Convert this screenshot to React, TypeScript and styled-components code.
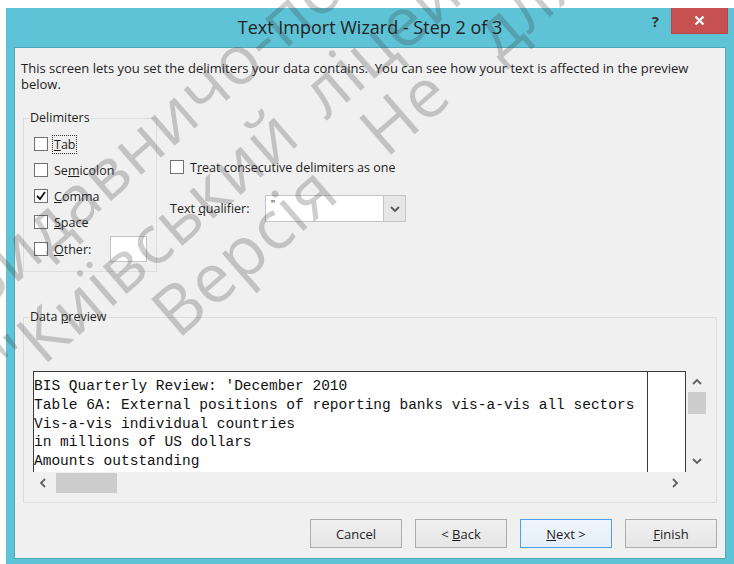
import React from 'react';
import styled, { createGlobalStyle, css } from 'styled-components';

const GlobalStyle = createGlobalStyle`
  html, body {
    margin: 0;
    padding: 0;
    background: #ffffff;
  }
  body {
    font-family: "Open Sans", "Noto Sans", sans-serif;
    color: #1e1e1e;
  }
`;

const UI_FONT = `"Open Sans", "Noto Sans", sans-serif`;

const Page = styled.div`
  position: relative;
  width: 734px;
  height: 564px;
  overflow: hidden;
`;

const Frame = styled.div`
  width: 728px;
  height: 556px;
  margin: 8px 0 0 6px;
  background: #5ec3d6;
  display: flex;
  flex-direction: column;
`;

const TitleBar = styled.div`
  height: 39px;
  display: grid;
  grid-template-columns: 1fr auto 1fr;
  align-items: start;
`;

const Title = styled.div`
  grid-column: 2;
  margin-top: 7px;
  font: 400 18px ${UI_FONT};
  color: #222;
  white-space: nowrap;
`;

const TitleControls = styled.div`
  grid-column: 3;
  justify-self: end;
  display: flex;
  align-items: flex-start;
  margin-right: 6px;
`;

const HelpGlyph = styled.span`
  font: 700 15px ${UI_FONT};
  color: #333;
  margin: 3px 12px 0 0;
`;

const CloseButton = styled.div`
  width: 57px;
  height: 26px;
  background: #c75050;
  border: 1px solid #b44848;
  border-top: none;
  box-sizing: border-box;
  display: flex;
  align-items: center;
  justify-content: center;
`;

const Client = styled.div`
  flex: 1;
  margin: 0 8px 5px 8px;
  background: #f0f0f0;
  border: 1px solid #4ba8b8;
  display: flex;
  flex-direction: column;
`;

const Intro = styled.p`
  margin: 12px 6px 0 6px;
  font: 400 13px/16px ${UI_FONT};
  color: #1e1e1e;
`;

const OptionsRow = styled.div`
  display: flex;
  gap: 13px;
  margin: 18px 0 0 8px;
`;

const Group = styled.fieldset<{ $width: number }>`
  width: ${p => p.$width}px;
  box-sizing: border-box;
  margin: 0;
  padding: 0;
  border: 1px solid #dcdcdc;
  min-inline-size: 0;
`;

const GroupLabel = styled.legend`
  margin-left: 5px;
  padding: 0 1px;
  font: 400 12.5px/16px ${UI_FONT};
  color: #1e1e1e;
`;

const DelimiterList = styled.div`
  display: flex;
  flex-direction: column;
  padding: 5px 0 8px 10px;
`;

const CheckRow = styled.label<{ $tall?: boolean }>`
  height: ${p => (p.$tall ? 28 : 26)}px;
  display: flex;
  align-items: center;
  gap: 4px;
  font: 400 12.5px ${UI_FONT};
  color: #1e1e1e;
`;

const Box = styled.span`
  width: 14px;
  height: 14px;
  box-sizing: border-box;
  border: 1px solid #707070;
  background: #fff;
  display: flex;
  align-items: center;
  justify-content: center;
  flex: none;
`;

const CheckText = styled.span<{ $focused?: boolean }>`
  padding: 0 1px;
  border: 1px dotted transparent;
  ${p =>
    p.$focused &&
    css`
      border-color: #333;
    `}
`;

const OtherInput = styled.span`
  width: 37px;
  height: 26px;
  box-sizing: border-box;
  margin-left: 13px;
  background: #fff;
  border: 1px solid #c4c4c4;
`;

const SideOptions = styled.div`
  display: flex;
  flex-direction: column;
  padding-top: 44px;
  gap: 15px;
`;

const QualifierRow = styled.div`
  display: flex;
  align-items: center;
  font: 400 12.5px ${UI_FONT};
`;

const QualifierLabel = styled.span`
  width: 95px;
  flex: none;
`;

const Select = styled.div`
  width: 141px;
  height: 27px;
  box-sizing: border-box;
  background: #fff;
  border: 1px solid #c4c4c4;
  display: flex;
`;

const SelectValue = styled.span`
  flex: 1;
  padding: 2px 0 0 5px;
  font: 400 11px "Liberation Sans", sans-serif;
  color: #333;
`;

const SelectArrow = styled.span`
  width: 21px;
  background: #e6e6e6;
  border-left: 1px solid #c4c4c4;
  display: flex;
  align-items: center;
  justify-content: center;
`;

const PreviewGroup = styled(Group)`
  margin: 37px 0 0 8px;
`;

const Preview = styled.div`
  display: grid;
  grid-template-columns: 653px 20px;
  grid-template-rows: 101px 21px;
  margin: 46px 0 9px 9px;
`;

const PreviewPane = styled.div`
  display: flex;
  background: #fff;
  border: 1px solid #3a3a3a;
  border-bottom: none;
  overflow: hidden;
`;

const PreviewText = styled.pre`
  width: 613px;
  flex: none;
  margin: 0;
  padding: 5px 0 0 0;
  border-right: 1px solid #3a3a3a;
  font: 400 14.5px/18.75px "Liberation Mono", "Courier New", monospace;
  color: #111;
  overflow: hidden;
`;

const VScroll = styled.div`
  display: flex;
  flex-direction: column;
  align-items: center;
  padding: 6px 0 6px 2px;
`;

const HScroll = styled.div`
  display: flex;
  align-items: center;
  padding: 0 6px 0 5px;
`;

const Thumb = styled.span<{ $w: number; $h: number }>`
  display: block;
  width: ${p => p.$w}px;
  height: ${p => p.$h}px;
  background: #cdcdcd;
  flex: none;
`;

const VThumbSlot = styled.div`
  flex: 1;
  align-self: stretch;
  padding-top: 5px;
`;

const HThumbSlot = styled.div`
  flex: 1;
  padding-left: 8px;
`;

const ButtonBar = styled.div`
  display: flex;
  justify-content: flex-end;
  gap: 13px;
  margin: 16px 8px 0 0;
`;

const Button = styled.button<{ $default?: boolean }>`
  width: 92px;
  height: 29px;
  padding: 0;
  font: 400 13px ${UI_FONT};
  color: #1e1e1e;
  background: linear-gradient(#f0f0f0, #e5e5e5);
  border: 1px solid #acacac;
  ${p =>
    p.$default &&
    css`
      border-color: #4c9fe8;
      background: linear-gradient(#eef5fc, #e6eef8);
    `}
`;

const Watermark = styled.div`
  position: absolute;
  inset: 0;
  pointer-events: none;
`;

const WatermarkLine = styled.span<{ $x: number; $y: number; $spread?: number }>`
  position: absolute;
  left: ${p => p.$x}px;
  top: ${p => p.$y}px;
  transform-origin: 0 60px;
  transform: rotate(-41deg);
  font: 400 68px/68px ${UI_FONT};
  letter-spacing: 1px;
  word-spacing: ${p => p.$spread ?? 0}px;
  color: rgba(60, 60, 60, 0.26);
  white-space: nowrap;
`;

type Dir = 'up' | 'down' | 'left' | 'right';

const CHEVRONS: Record<Dir, string> = {
  up: '1,7 5,3 9,7',
  down: '1,3 5,7 9,3',
  left: '7,1 3,5 7,9',
  right: '3,1 7,5 3,9',
};

const Chevron = ({ dir, color = '#606060' }: { dir: Dir; color?: string }) => (
  <svg width="10" height="10" viewBox="0 0 10 10">
    <polyline points={CHEVRONS[dir]} fill="none" stroke={color} strokeWidth="1.8" />
  </svg>
);

const CheckMark = () => (
  <svg width="10" height="10" viewBox="0 0 10 10">
    <polyline points="1,5 4,8 9,1" fill="none" stroke="#111" strokeWidth="1.8" />
  </svg>
);

const Check = ({ checked, children, focused }: { checked?: boolean; focused?: boolean; children: React.ReactNode }) => (
  <CheckRow>
    <Box>{checked && <CheckMark />}</Box>
    <CheckText $focused={focused}>{children}</CheckText>
  </CheckRow>
);

const PREVIEW_LINES = [
  "BIS Quarterly Review: 'December 2010",
  'Table 6A: External positions of reporting banks vis-a-vis all sectors',
  'Vis-a-vis individual countries',
  'in millions of US dollars',
  'Amounts outstanding',
];

export default function App() {
  return (
    <Page>
      <GlobalStyle />
      <Frame>
        <TitleBar>
          <Title>Text Import Wizard - Step 2 of 3</Title>
          <TitleControls>
            <HelpGlyph>?</HelpGlyph>
            <CloseButton>
              <svg width="11" height="11" viewBox="0 0 11 11">
                <path d="M1.5 1.5 L9.5 9.5 M9.5 1.5 L1.5 9.5" stroke="#fff" strokeWidth="2.2" />
              </svg>
            </CloseButton>
          </TitleControls>
        </TitleBar>
        <Client>
          <Intro>
            This screen lets you set the delimiters your data contains.&nbsp; You can see how your text is affected in the
            preview below.
          </Intro>
          <OptionsRow>
            <Group $width={134}>
              <GroupLabel>Delimiters</GroupLabel>
              <DelimiterList>
                <Check focused>
                  <u>T</u>ab
                </Check>
                <Check>
                  Se<u>m</u>icolon
                </Check>
                <Check checked>
                  <u>C</u>omma
                </Check>
                <Check>
                  <u>S</u>pace
                </Check>
                <CheckRow $tall>
                  <Box />
                  <CheckText>
                    <u>O</u>ther:
                  </CheckText>
                  <OtherInput />
                </CheckRow>
              </DelimiterList>
            </Group>
            <SideOptions>
              <Check>
                T<u>r</u>eat consecutive delimiters as one
              </Check>
              <QualifierRow>
                <QualifierLabel>
                  Text <u>q</u>ualifier:
                </QualifierLabel>
                <Select>
                  <SelectValue>"</SelectValue>
                  <SelectArrow>
                    <Chevron dir="down" color="#555" />
                  </SelectArrow>
                </Select>
              </QualifierRow>
            </SideOptions>
          </OptionsRow>
          <PreviewGroup $width={694}>
            <GroupLabel>
              Data <u>p</u>review
            </GroupLabel>
            <Preview>
              <PreviewPane>
                <PreviewText>{PREVIEW_LINES.join('\n')}</PreviewText>
              </PreviewPane>
              <VScroll>
                <Chevron dir="up" />
                <VThumbSlot>
                  <Thumb $w={18} $h={22} />
                </VThumbSlot>
                <Chevron dir="down" />
              </VScroll>
              <HScroll>
                <Chevron dir="left" />
                <HThumbSlot>
                  <Thumb $w={61} $h={20} />
                </HThumbSlot>
                <Chevron dir="right" />
              </HScroll>
            </Preview>
          </PreviewGroup>
          <ButtonBar>
            <Button>Cancel</Button>
            <Button>
              &lt; <u>B</u>ack
            </Button>
            <Button $default>
              <u>N</u>ext &gt;
            </Button>
            <Button>
              <u>F</u>inish
            </Button>
          </ButtonBar>
        </Client>
      </Frame>
      <Watermark>
        <WatermarkLine $x={-20} $y={255}>Видавничо-поліграфічний</WatermarkLine>
        <WatermarkLine $x={22} $y={325} $spread={12}>"Київський ліцей"</WatermarkLine>
        <WatermarkLine $x={178} $y={280} $spread={40}>Версія Не для друку</WatermarkLine>
      </Watermark>
    </Page>
  );
}
